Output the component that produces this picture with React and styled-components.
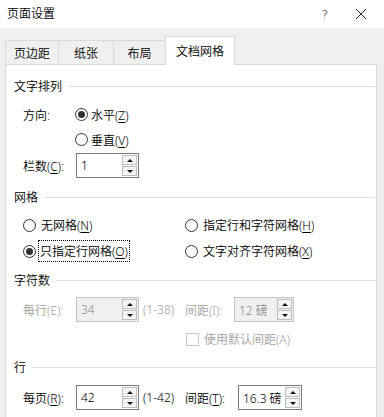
import React from 'react'
import styled, { createGlobalStyle, css } from 'styled-components';

const Global = createGlobalStyle`
    html, body {
        margin: 0;
        background: #ffffff;
    }
    body {
        font-family: "Noto Sans", "Noto Sans CJK SC", sans-serif;
        font-size: 12px;
        font-weight: 350;
        color: #000;
    }
`;

const Window = styled.div`
    width: 384px;
    height: 417px;
    overflow: hidden;
    background: #f0f0f0;
`;

const TitleBar = styled.div`
    height: 28px;
    background: #fff;
    display: flex;
    align-items: center;
    padding-left: 7px;
`;

const Title = styled.div`
    flex: 1;
    line-height: 14px;
`;

const TitleButton = styled.div`
    width: ${p => p.w}px;
    height: 28px;
    display: flex;
    align-items: center;
    justify-content: center;
    font-size: 13px;
    color: #222;
    font-family: "DejaVu Sans", sans-serif;
`;

const Body = styled.div`
    padding: 8px 7px 0 5px;
`;

const Tabs = styled.div`
    display: flex;
    align-items: flex-end;
    height: 28px;
`;

const Tab = styled.div`
    width: ${p => p.w}px;
    height: 24px;
    box-sizing: border-box;
    display: flex;
    align-items: center;
    justify-content: center;
    background: #f0f0f0;
    border: 1px solid #d9d9d9;
    border-bottom: none;
    border-right: none;
    ${p => p.$active && css`
        background: #fff;
        border: 1px solid #d9d9d9;
        border-bottom: none;
        margin-bottom: -1px;
        height: 29px;
        padding-bottom: 1px;
        position: relative;
        z-index: 1;
    `}
`;

const Panel = styled.div`
    background: #fff;
    border: 1px solid #d9d9d9;
    border-bottom: none;
    height: 360px;
    padding: 12px 1px 0 8px;
`;

const Heading = styled.div`
    display: flex;
    align-items: center;
    height: 18px;
    margin-top: ${p => p.mt || 0}px;

    &::after {
        content: "";
        flex: 1;
        height: 1px;
        background: #dcdcdc;
        margin-left: 7px;
    }
`;

const Row = styled.div`
    display: flex;
    align-items: center;
    height: ${p => p.h || 25}px;
    margin-top: ${p => p.mt || 0}px;
    padding-left: ${p => p.pl ?? 9}px;
    color: ${p => p.$disabled ? '#a0a0a0' : '#000'};
`;

const Label = styled.div`
    width: ${p => p.w}px;
    flex-shrink: 0;
    box-sizing: border-box;
    padding-left: ${p => p.pl || 0}px;
    white-space: nowrap;
`;

const KeyText = styled.span`
    font-family: "Noto Sans", sans-serif;
`;

const U = styled.span`
    text-decoration: underline;
    text-underline-offset: 2px;
`;

const Key = ({ k, plain }) => (
    <KeyText>({plain ? k : <U>{k}</U>})</KeyText>
);

const RadioLabel = styled.label`
    display: flex;
    align-items: center;
    gap: ${p => p.gap ?? 4}px;
    width: ${p => p.w ? `${p.w}px` : 'auto'};
    white-space: nowrap;
`;

const Circle = styled.span`
    width: 13px;
    height: 13px;
    box-sizing: border-box;
    border-radius: 50%;
    border: 1px solid #333;
    display: flex;
    align-items: center;
    justify-content: center;
    flex-shrink: 0;

    &::after {
        content: "";
        width: 7px;
        height: 7px;
        border-radius: 50%;
        background: ${p => p.$on ? '#333' : 'transparent'};
    }
`;

const Focus = styled.span`
    outline: 1px dotted #000;
    outline-offset: 0;
    padding: 1px 1px;
    margin-left: -2px;
`;

const SpinBox = styled.div`
    width: ${p => p.w}px;
    height: 25px;
    box-sizing: border-box;
    border: 1px solid ${p => p.$disabled ? '#c4c4c4' : '#7a7a7a'};
    background: ${p => p.$disabled ? '#f0f0f0' : '#fff'};
    display: flex;
    align-items: center;
    flex-shrink: 0;
`;

const SpinValue = styled.div`
    flex: 1;
    padding-left: 4px;
    color: ${p => p.$disabled ? '#8a8a8a' : '#000'};
    white-space: nowrap;
`;

const SpinButtons = styled.div`
    width: 15px;
    height: 21px;
    margin-right: 1px;
    display: flex;
    flex-direction: column;
    gap: 1px;
`;

const SpinButton = styled.div`
    flex: 1;
    box-sizing: border-box;
    border: 1px solid #bdbdbd;
    background: #f4f4f4;
    display: flex;
    align-items: center;
    justify-content: center;

    &::after {
        content: "";
        border-left: 3px solid transparent;
        border-right: 3px solid transparent;
        ${p => p.$up
            ? css`border-bottom: 3px solid #111;`
            : css`border-top: 3px solid #111;`}
    }
`;

const CheckBox = styled.span`
    width: 13px;
    height: 13px;
    box-sizing: border-box;
    border: 1px solid #c8c8c8;
    background: #fff;
    flex-shrink: 0;
`;

const Spinner = ({ value, w, disabled }) => (
    <SpinBox w={w} $disabled={disabled}>
        <SpinValue $disabled={disabled}>{value}</SpinValue>
        <SpinButtons>
            <SpinButton $up />
            <SpinButton />
        </SpinButtons>
    </SpinBox>
);

const Radio = ({ on, children, w, gap }) => (
    <RadioLabel w={w} gap={gap}>
        <Circle $on={on} />
        {children}
    </RadioLabel>
);

const Close = () => (
    <svg width="12" height="12" viewBox="0 0 12 12">
        <path d="M1 1 L11 11 M11 1 L1 11" stroke="#222" strokeWidth="1" />
    </svg>
);

const App = () => {
  return (
    <Window>
        <Global />
        <TitleBar>
            <Title>页面设置</Title>
            <TitleButton w={26}>?</TitleButton>
            <TitleButton w={46}><Close /></TitleButton>
        </TitleBar>
        <Body>
            <Tabs>
                <Tab w={53}>页边距</Tab>
                <Tab w={55}>纸张</Tab>
                <Tab w={52}>布局</Tab>
                <Tab w={70} $active>文档网格</Tab>
            </Tabs>
            <Panel>
                <Heading>文字排列</Heading>
                <Row mt={7}>
                    <Label w={52}>方向:</Label>
                    <Radio on gap={3}><span>水平<Key k="Z" /></span></Radio>
                </Row>
                <Row>
                    <Label w={52} />
                    <Radio gap={3}><span>垂直<Key k="V" /></span></Radio>
                </Row>
                <Row mt={1}>
                    <Label w={53}>栏数<Key k="C" />:</Label>
                    <Spinner value="1" w={63} />
                </Row>

                <Heading mt={10}>网格</Heading>
                <Row h={26} mt={6}>
                    <Radio w={162} gap={5}><span>无网格<Key k="N" /></span></Radio>
                    <Radio gap={5}><span>指定行和字符网格<Key k="H" /></span></Radio>
                </Row>
                <Row h={26}>
                    <Radio w={162} on gap={5}><Focus>只指定行网格<Key k="O" /></Focus></Radio>
                    <Radio gap={5}><span>文字对齐字符网格<Key k="X" /></span></Radio>
                </Row>

                <Heading mt={7}>字符数</Heading>
                <Row mt={8} $disabled>
                    <Label w={53}>每行<Key k="E" plain />:</Label>
                    <Spinner value="34" w={63} disabled />
                    <Label w={46} pl={4}>(1-38)</Label>
                    <Label w={49}>间距<Key k="I" plain />:</Label>
                    <Spinner value="12 磅" w={60} disabled />
                </Row>
                <Row h={20} mt={7} pl={172} $disabled>
                    <RadioLabel gap={5}>
                        <CheckBox />
                        <span>使用默认间距<Key k="A" plain /></span>
                    </RadioLabel>
                </Row>

                <Heading mt={9}>行</Heading>
                <Row mt={9}>
                    <Label w={53}>每页<Key k="R" />:</Label>
                    <Spinner value="42" w={63} />
                    <Label w={46} pl={4}>(1-42)</Label>
                    <Label w={53}>间距<Key k="T" />:</Label>
                    <Spinner value="16.3 磅" w={64} />
                </Row>
            </Panel>
        </Body>
    </Window>
  )
}

export default App;
